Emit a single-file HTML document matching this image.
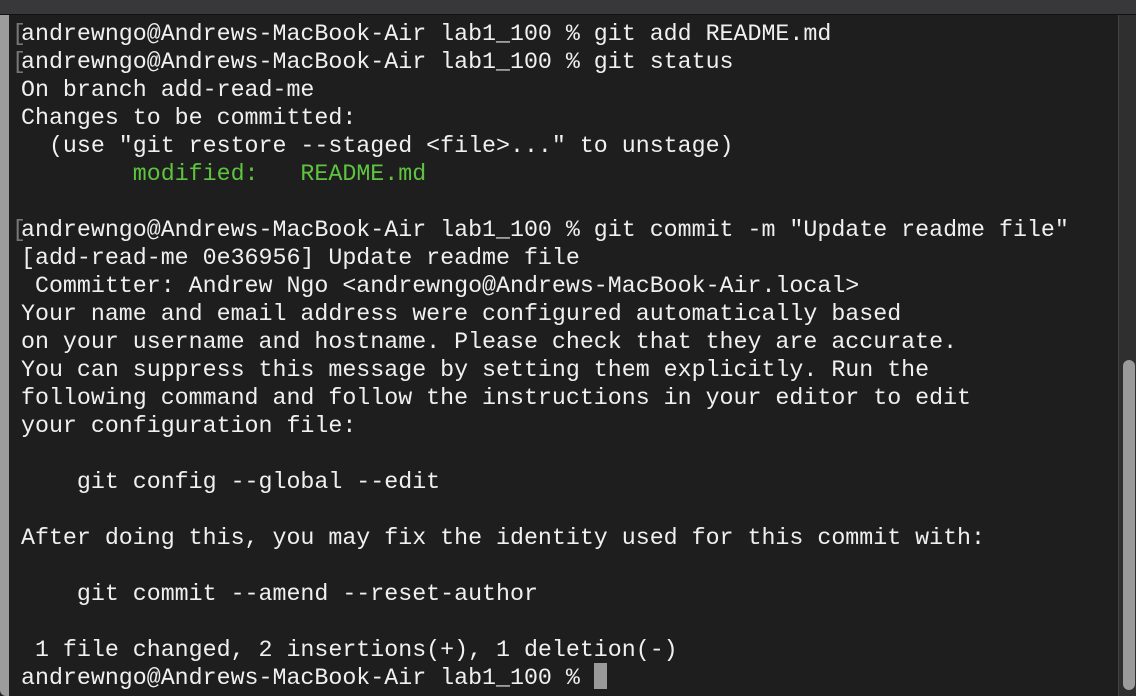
<!DOCTYPE html>
<html><head><meta charset="utf-8"><style>
html,body{margin:0;padding:0;width:1136px;height:696px;overflow:hidden;background:#1e1e1e}
.top{position:absolute;left:0;top:0;width:1136px;height:14px;background:#38383a;border-bottom:1px solid #111}
.left{position:absolute;left:0;top:15px;width:9px;height:681px;background:#9c9c9c;border-bottom-left-radius:6px}
.term{position:absolute;left:9px;top:15px;width:1109px;height:681px;background:#1e1e1e}
.track{position:absolute;left:1118px;top:15px;width:18px;height:681px;background:#2f2f2f;border-left:1px solid #444}
.thumb{position:absolute;left:1123px;top:360px;width:12px;height:330px;background:#9b9b9b;border-radius:6px}
pre{position:absolute;left:21px;top:20px;margin:0;font-family:"Liberation Mono",monospace;font-size:23.29px;line-height:28px;color:#f0f0f0;white-space:pre}
.g{color:#5ec440}
.b{position:absolute;left:12px;color:#777;font-family:"Liberation Mono",monospace;font-size:23.29px;line-height:28px}
.cur{position:absolute;left:594px;top:663px;width:13px;height:26px;background:#9a9a9a}
</style></head><body>
<div class="top"></div><div class="left"></div><div class="term"></div>
<div class="track"></div><div class="thumb"></div>
<div class="b" style="top:20px">[</div><div class="b" style="top:48px">[</div><div class="b" style="top:216px">[</div>
<pre>andrewngo@Andrews-MacBook-Air lab1_100 % git add README.md
andrewngo@Andrews-MacBook-Air lab1_100 % git status
On branch add-read-me
Changes to be committed:
  (use "git restore --staged &lt;file&gt;..." to unstage)
	<span class="g">modified:   README.md</span>

andrewngo@Andrews-MacBook-Air lab1_100 % git commit -m "Update readme file"
[add-read-me 0e36956] Update readme file
 Committer: Andrew Ngo &lt;andrewngo@Andrews-MacBook-Air.local&gt;
Your name and email address were configured automatically based
on your username and hostname. Please check that they are accurate.
You can suppress this message by setting them explicitly. Run the
following command and follow the instructions in your editor to edit
your configuration file:

    git config --global --edit

After doing this, you may fix the identity used for this commit with:

    git commit --amend --reset-author

 1 file changed, 2 insertions(+), 1 deletion(-)
andrewngo@Andrews-MacBook-Air lab1_100 % </pre>
<div class="cur"></div>
</body></html>
